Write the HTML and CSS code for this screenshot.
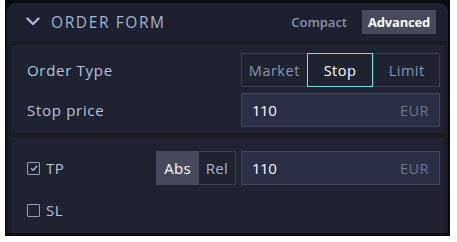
FILE: index.html
```html
<!DOCTYPE html>
<html lang="en">
<head>
    <meta charset="UTF-8">
    <title>Order form</title>
    <link rel="stylesheet" href="styles.css">
</head>
<body>
    <div class="frame">
        <div class="panel">
            <div class="header">
                <svg class="chevron" width="14" height="9" viewBox="0 0 14 9">
                    <path d="M1.5 1.5 L7 7 L12.5 1.5" fill="none" stroke="#a9bbd8" stroke-width="2.4" stroke-linecap="round" stroke-linejoin="round"/>
                </svg>
                <span class="title">ORDER FORM</span>
                <div class="modes">
                    <span class="mode">Compact</span>
                    <span class="mode active">Advanced</span>
                </div>
            </div>

            <div class="section">
                <div class="row">
                    <span class="label">Order Type</span>
                    <div class="seg">
                        <span class="seg-item">Market</span>
                        <span class="seg-item on">Stop</span>
                        <span class="seg-item">Limit</span>
                    </div>
                </div>
                <div class="row">
                    <span class="label">Stop price</span>
                    <div class="field">
                        <span class="val">110</span>
                        <span class="cur">EUR</span>
                    </div>
                </div>
            </div>

            <div class="section second">
                <div class="row">
                    <label class="check">
                        <span class="box">
                            <svg width="10" height="10" viewBox="0 0 10 10">
                                <path d="M2 5.2 L4.2 7.3 L8.2 2.8" fill="none" stroke="#a9bbd8" stroke-width="1.3"/>
                            </svg>
                        </span>
                        TP
                    </label>
                    <div class="abs-rel">
                        <span class="ar on">Abs</span>
                        <span class="ar">Rel</span>
                    </div>
                    <div class="field">
                        <span class="val">110</span>
                        <span class="cur">EUR</span>
                    </div>
                </div>
                <div class="row short">
                    <label class="check">
                        <span class="box"></span>
                        SL
                    </label>
                </div>
            </div>
        </div>
    </div>
</body>
</html>
```

FILE: styles.css
```css
* {
    margin: 0;
    padding: 0;
    box-sizing: border-box;
}
body {
    background: #fff;
    font-family: "Open Sans", "Noto Sans", sans-serif;
}
.frame {
    margin-left: 5px;
    width: 445px;
    height: 236px;
    background: #0b0c11;
    padding: 3px 2px 3px 2px;
}
.panel {
    height: 100%;
    background: #191b25;
    border-radius: 9px 9px 0 0;
    overflow: hidden;
}
.header {
    height: 38px;
    background: #1d2030;
    display: flex;
    align-items: center;
    padding: 0 12px 0 19px;
}
.chevron {
    margin-top: -2px;
}
.title {
    margin-left: 11px;
    font-size: 15.5px;
    letter-spacing: 1.6px;
    color: #a4b4d0;
}
.modes {
    margin-left: auto;
    display: flex;
    align-items: center;
    gap: 9px;
}
.mode {
    font-size: 13px;
    font-weight: 600;
    color: #8892a6;
    padding: 3px 6px;
}
.mode.active {
    background: #464a5c;
    color: #fff;
    font-weight: 700;
    letter-spacing: -0.2px;
}
.section {
    margin: 4px 4px 0 4px;
    background: #1f2231;
    padding: 8px 4px 6px 16px;
    display: flex;
    flex-direction: column;
    gap: 6px;
}
.section.second {
    margin-top: 5px;
    height: 95px;
    padding-top: 13px;
    gap: 8px;
}
.row {
    display: flex;
    align-items: center;
    height: 34px;
}
.label {
    font-size: 15px;
    letter-spacing: 0.7px;
    color: #b6c3dc;
}
.seg {
    margin-left: auto;
    width: 199px;
    height: 34px;
    display: flex;
    border: 1px solid #3a3e50;
}
.seg-item {
    flex: 1;
    display: flex;
    align-items: center;
    justify-content: center;
    font-size: 14.5px;
    letter-spacing: 0.5px;
    color: #8a94aa;
    border-left: 1px solid #3a3e50;
}
.seg-item:first-child {
    border-left: none;
}
.seg-item.on {
    color: #fff;
    border: 1px solid #7fd6e4;
    margin: -1px 0;
}
.field {
    margin-left: auto;
    width: 199px;
    height: 34px;
    background: #2b2f45;
    border: 1px solid #42465a;
    display: flex;
    align-items: center;
    justify-content: space-between;
    padding: 0 10px;
}
.val {
    font-size: 15px;
    color: #fff;
    letter-spacing: -0.5px;
}
.cur {
    font-size: 14.5px;
    letter-spacing: 0.5px;
    color: #6f7588;
}
.check {
    display: flex;
    align-items: center;
    gap: 6px;
    font-size: 15px;
    letter-spacing: 0.5px;
    color: #b6c3dc;
    width: 129px;
}
.box {
    width: 13px;
    height: 13px;
    border: 1.5px solid #8aa0c8;
    border-radius: 1px;
    display: flex;
    align-items: center;
    justify-content: center;
}
.abs-rel {
    display: flex;
    width: 80px;
    height: 34px;
    border: 1px solid #3a3e50;
}
.ar {
    flex: 1;
    display: flex;
    align-items: center;
    justify-content: center;
    font-size: 15px;
    letter-spacing: 0.3px;
    color: #a7b6d2;
}
.ar.on {
    flex: 0 0 43px;
    margin: -1px 0 -1px -1px;
    background: #464a5c;
    color: #fff;
}
```
